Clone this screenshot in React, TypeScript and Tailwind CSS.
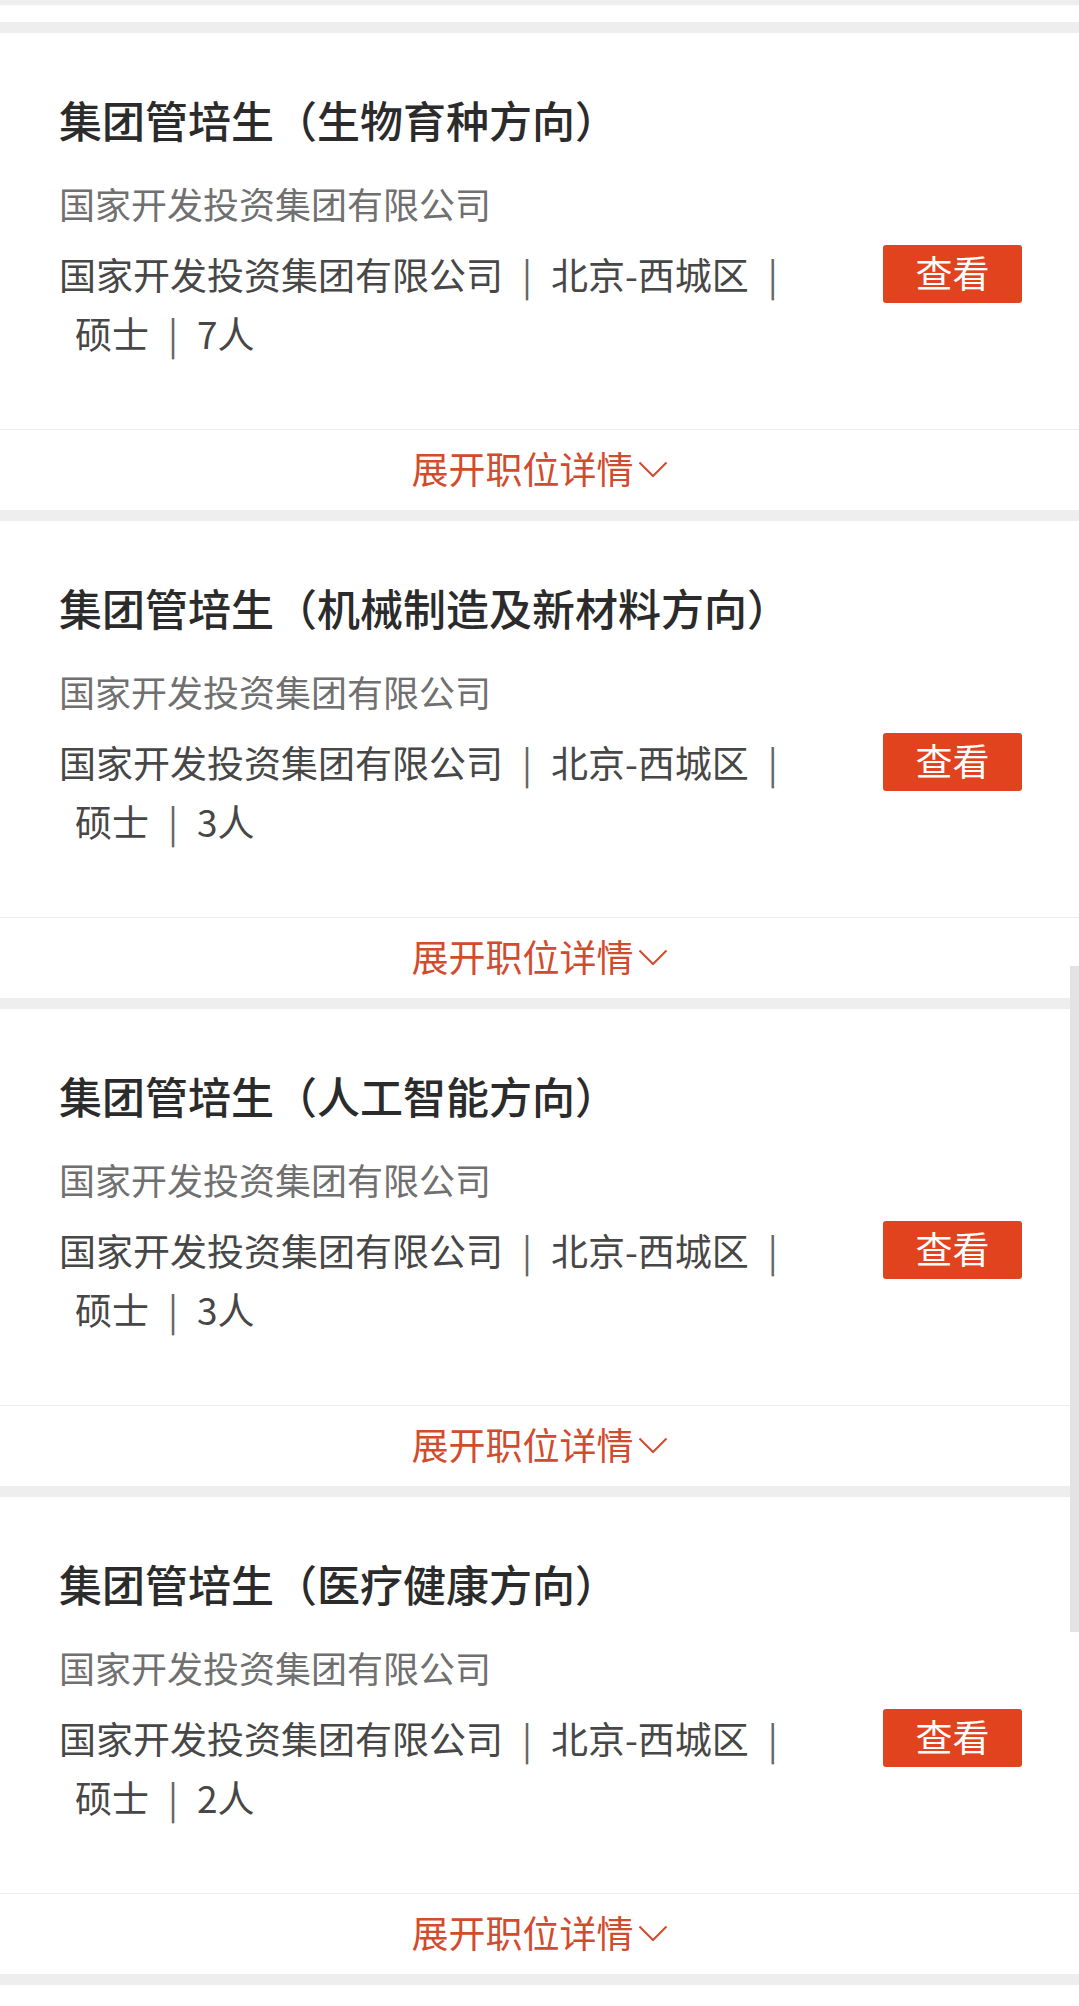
const jobs = [
  { title: '集团管培生（生物育种方向）', count: '7人' },
  { title: '集团管培生（机械制造及新材料方向）', count: '3人' },
  { title: '集团管培生（人工智能方向）', count: '3人' },
  { title: '集团管培生（医疗健康方向）', count: '2人' },
];

const company = '国家开发投资集团有限公司';

const Sep = () => (
  <span className="inline-block ml-[19px] mr-[3px] text-[#666]">|</span>
);

const Chevron = () => (
  <svg width="30" height="17" viewBox="0 0 30 17" className="ml-[4px] mt-[2px]">
    <polyline points="1.5,1.5 15,15 28.5,1.5" fill="none" stroke="#d24b2c" strokeWidth="2" />
  </svg>
);

const JobCard = ({ title, count }: { title: string; count: string }) => {
  return (
    <div className="bg-white">
      <div className="pl-[59px] pr-[57px] pt-[58px] pb-[66px]">
        <h2 className="text-[43px] leading-[56px] font-medium text-[#2b2b2b] whitespace-nowrap">
          {title}
        </h2>
        <p className="mt-[32px] text-[36px] leading-[48px] text-[#707070]">{company}</p>
        <div className="mt-[18px] flex items-start">
          <div className="flex-1 pr-[40px] text-[37px] leading-[59px] text-[#474747]">
            <span className="inline-block whitespace-nowrap">{company}</span>
            <Sep />
            <span className="inline-block whitespace-nowrap pl-[16px]">北京-西城区</span>
            <Sep />
            <span className="inline-block whitespace-nowrap pl-[16px]">硕士</span>
            <Sep />
            <span className="inline-block whitespace-nowrap pl-[16px]">{count}</span>
          </div>
          <button className="w-[139px] h-[58px] shrink-0 rounded-[3px] bg-[#e1431f] text-white text-[37px] leading-none pb-[3px] flex items-center justify-center">
            查看
          </button>
        </div>
      </div>
      <div className="h-px bg-[#ececec]" />
      <button className="w-full h-[80px] pb-[4px] flex items-center justify-center text-[37px] leading-none text-[#d24b2c]">
        展开职位详情
        <Chevron />
      </button>
    </div>
  );
};

export default function App() {
  return (
    <div
      className="relative w-[1079px] min-h-[2006px] bg-white overflow-hidden"
      style={{ fontFamily: '"Noto Sans CJK SC", "Noto Sans", sans-serif' }}
    >
      <div className="h-[5px] bg-[#eeeeee]" />
      <div className="h-[17px] bg-white" />
      <div className="h-[11px] bg-[#eeeeee]" />
      {jobs.map((job) => (
        <div key={job.title}>
          <JobCard title={job.title} count={job.count} />
          <div className="h-[11px] bg-[#eeeeee]" />
        </div>
      ))}
      <div className="absolute right-0 top-[966px] w-[9px] h-[666px] bg-[#e3e3e3]" />
    </div>
  );
}
